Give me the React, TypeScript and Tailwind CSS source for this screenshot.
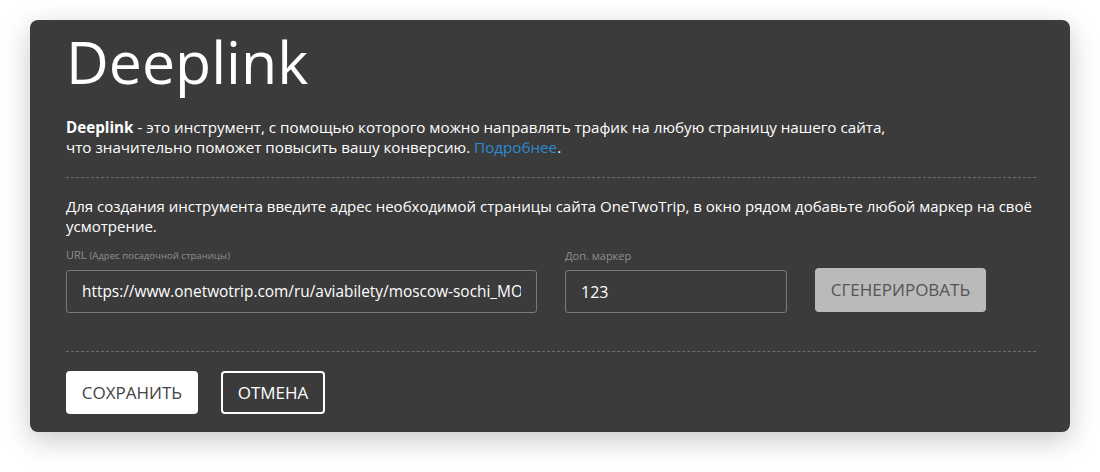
import React from "react";

const font = { fontFamily: '"Open Sans", "Noto Sans", sans-serif' };

const Divider = () => (
  <div className="border-t border-dashed border-[#6e6e6e]" />
);

export default function App() {
  return (
    <div className="min-h-[472px] bg-white pt-[20px] px-[30px]" style={font}>
      <div className="rounded-lg bg-[#3b3b3b] pl-[36px] pr-[34px] pt-[12px] pb-[18px] shadow-[0_8px_28px_rgba(0,0,0,0.22)]">
        <h1 className="text-[59px] leading-[58px] text-white font-normal">Deeplink</h1>

        <p className="mt-[27px] text-[15.2px] leading-[20px] text-white">
          <b className="font-bold">Deeplink</b> - это инструмент, с помощью которого можно направлять трафик на любую страницу нашего сайта,
          <br />
          что значительно поможет повысить вашу конверсию.{" "}
          <a className="text-[#2a8ad4]">Подробнее</a>.
        </p>

        <div className="mt-[20px]">
          <Divider />
        </div>

        <p className="mt-[18px] text-[15px] leading-[20px] text-white">
          Для создания инструмента введите адрес необходимой страницы сайта OneTwoTrip, в окно рядом добавьте любой маркер на своё усмотрение.
        </p>

        <div className="mt-[12px] flex items-end gap-[28px]">
          <div className="flex flex-col">
            <label className="text-[11px] leading-[14px] text-[#8f8f8f]">
              URL <span className="text-[9.6px]">(Адрес посадочной страницы)</span>
            </label>
            <input
              readOnly
              value="https://www.onetwotrip.com/ru/aviabilety/moscow-sochi_MOW-AER/"
              className="mt-[7px] h-[43px] w-[471px] rounded-[3px] border border-[#7a7a7a] bg-transparent px-[15px] text-[15.4px] text-white outline-none"
              style={font}
            />
          </div>
          <div className="flex flex-col">
            <label className="text-[11px] leading-[14px] text-[#8f8f8f]">Доп. маркер</label>
            <input
              readOnly
              value="123"
              className="mt-[7px] h-[43px] w-[222px] rounded-[3px] border border-[#7a7a7a] bg-transparent px-[15px] text-[16px] text-white outline-none"
              style={font}
            />
          </div>
          <button
            className="mb-[1px] h-[44px] w-[171px] rounded-[4px] bg-[#bababa] text-[17px] text-[#555555] uppercase"
            style={font}
          >
            Сгенерировать
          </button>
        </div>

        <div className="mt-[38px]">
          <Divider />
        </div>

        <div className="mt-[19px] flex gap-[23px]">
          <button
            className="h-[43px] w-[132px] rounded-[4px] bg-white text-[17px] text-[#444444] uppercase"
            style={font}
          >
            Сохранить
          </button>
          <button
            className="h-[43px] w-[104px] rounded-[4px] border-2 border-white bg-transparent text-[17px] text-white uppercase"
            style={font}
          >
            Отмена
          </button>
        </div>
      </div>
    </div>
  );
}
